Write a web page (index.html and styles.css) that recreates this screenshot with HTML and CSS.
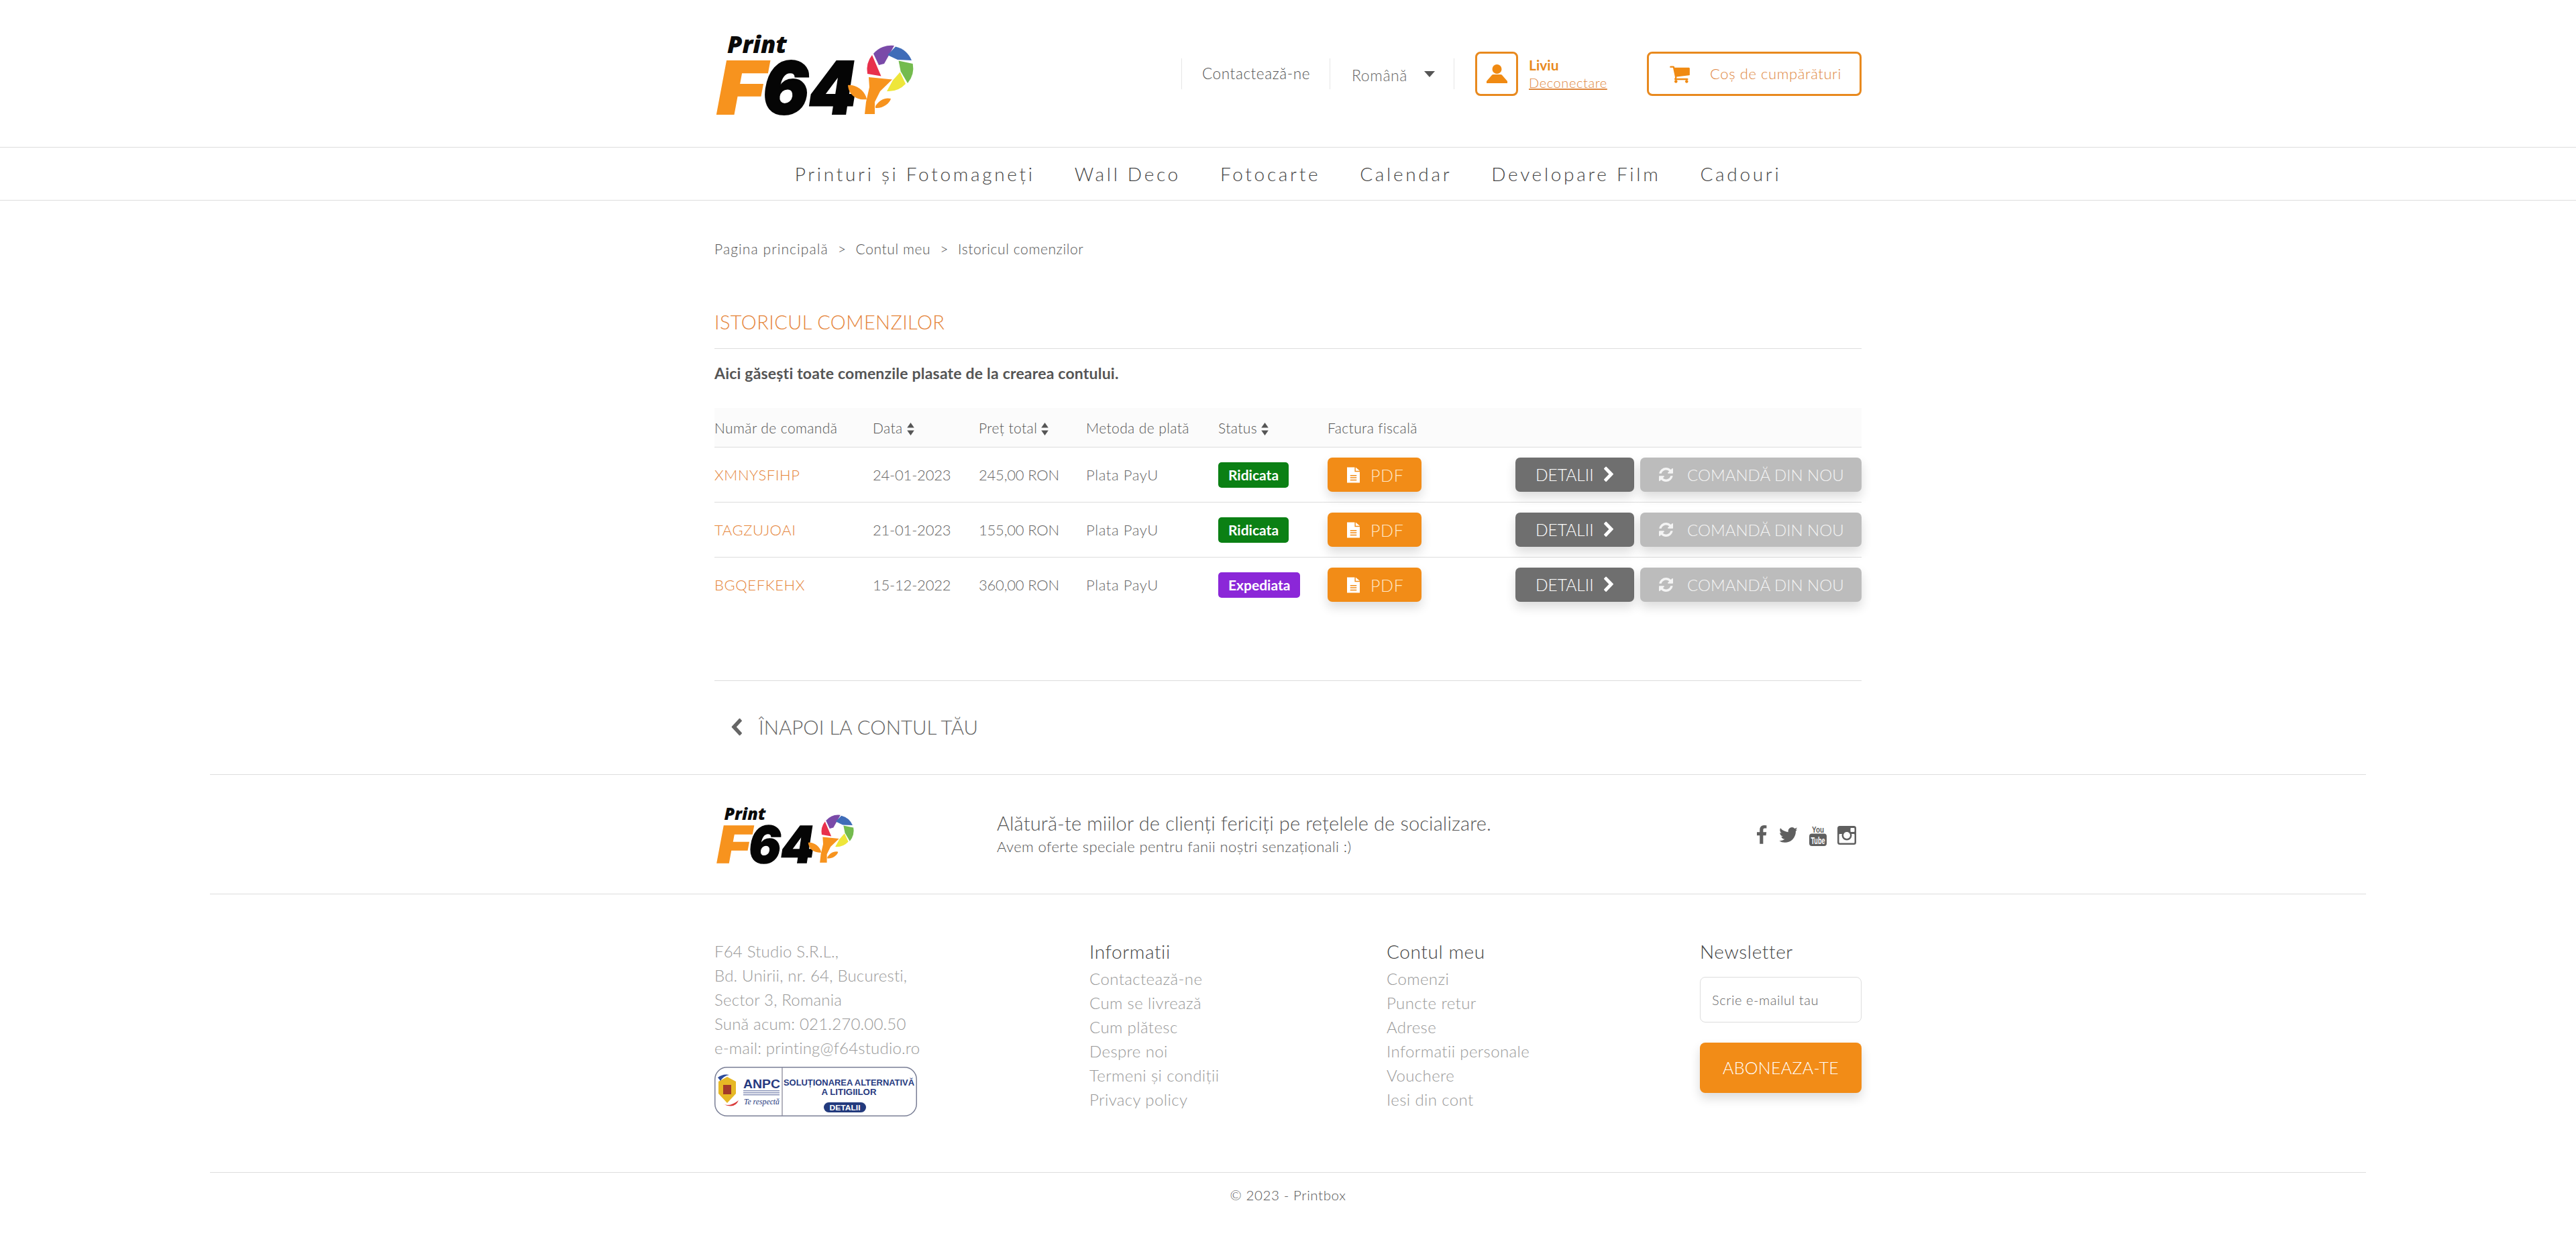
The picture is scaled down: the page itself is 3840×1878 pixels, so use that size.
FILE: index.html
```html
<!DOCTYPE html>
<html lang="ro">
<head>
<meta charset="utf-8">
<title>Istoricul comenzilor</title>
<link rel="stylesheet" href="styles.css">
</head>
<body>
<header class="top">
  <div class="wrap top-row">
    <a class="logo" href="#">
      <svg class="logo-svg" viewBox="29 20 293 120">
        <text class="lg-print" x="44" y="49" textLength="89" lengthAdjust="spacingAndGlyphs">Print</text>
        <text class="lg-f" x="29" y="140" textLength="72" lengthAdjust="spacingAndGlyphs">F</text>
        <text class="lg-64" x="97" y="140" textLength="140" lengthAdjust="spacingAndGlyphs">64</text>
        <path fill="#e8304c" d="M260 52A35 35 0 0 0 253 80L273.500 83.500Z"/>
        <path fill="#7a4aa8" d="M262 50A35 35 0 0 1 293 38L278 65 270 67Z"/>
        <path fill="#3f6cb8" d="M295 39.500A35 35 0 0 1 319 60L298 59 283 52Z"/>
        <path fill="#74bb4e" d="M299.500 60.500L320.700 65A35 35 0 0 1 313 94L302.700 76.500Z"/>
        <path fill="#eee63a" d="M310 95A35 35 0 0 1 282 106L290.700 90 301.700 77.500Z"/>
        <path fill="#f7931e" d="M255 85L290 88.500 272 106 264 122 264 140 249 140 251 122 256 100ZM224 97C235 95 250 105 252 118 238 120 225 112 224 97ZM265 128C272 118 280 115 288 117 286 125 275 132 265 131Z"/>
      </svg>
    </a>
    <div class="top-right">
      <a class="top-cell contact" href="#">Contactează-ne</a>
      <div class="top-cell lang"><span>Română</span><i class="caret"></i></div>
      <a class="user-box" href="#">
        <svg class="user-ico" viewBox="0 0 31 28"><circle cx="15.500" cy="7" r="7"/><path d="M10 15h11q2 0 3 2l7 8v3H0v-3l7-8q1-2 3-2z"/></svg>
      </a>
      <div class="user-text"><b>Liviu</b><a href="#">Deconectare</a></div>
      <a class="cart" href="#">
        <svg class="cart-ico" viewBox="0 0 1792 1792"><path d="M704 1536q0 52-38 90t-90 38-90-38-38-90 38-90 90-38 90 38 38 90zm896 0q0 52-38 90t-90 38-90-38-38-90 38-90 90-38 90 38 38 90zm128-1088v512q0 24-16.500 42.500t-40.500 21.500l-1044 122q13 60 13 70 0 16-24 64h920q26 0 45 19t19 45-19 45-45 19h-1024q-26 0-45-19t-19-45q0-11 8-31.500t16-36 21.500-40 15.500-29.500l-177-823h-204q-26 0-45-19t-19-45 19-45 45-19h256q16 0 28.500 6.500t19.500 15.500 13 24.500 8 26 5.500 29.500 4.500 26h1201q26 0 45 19t19 45z"/></svg>
        <span>Coș de cumpărături</span>
      </a>
    </div>
  </div>
</header>
<nav class="nav">
  <a href="#">Printuri și Fotomagneți</a>
  <a href="#">Wall Deco</a>
  <a href="#">Fotocarte</a>
  <a href="#">Calendar</a>
  <a href="#">Developare Film</a>
  <a href="#">Cadouri</a>
</nav>
<main class="wrap">
  <div class="crumbs"><a href="#">Pagina principală</a><span>&gt;</span><a href="#">Contul meu</a><span>&gt;</span><a href="#">Istoricul comenzilor</a></div>
  <h1 class="title">ISTORICUL COMENZILOR</h1>
  <p class="lead">Aici găsești toate comenzile plasate de la crearea contului.</p>
  <div class="orders">
    <div class="row head">
      <div>Număr de comandă</div>
      <div>Data <svg class="sort" viewBox="0 0 10 18"><path d="M5 0l5 7H0zM5 18L0 11h10z"/></svg></div>
      <div>Preț total <svg class="sort" viewBox="0 0 10 18"><path d="M5 0l5 7H0zM5 18L0 11h10z"/></svg></div>
      <div>Metoda de plată</div>
      <div>Status <svg class="sort" viewBox="0 0 10 18"><path d="M5 0l5 7H0zM5 18L0 11h10z"/></svg></div>
      <div>Factura fiscală</div>
      <div></div>
    </div>
    <div class="row">
      <a class="ref" href="#">XMNYSFIHP</a><div class="num">24-01-2023</div><div class="num">245,00 RON</div><div>Plata PayU</div>
      <div><span class="badge green">Ridicata</span></div>
      <div><a class="btn pdf" href="#"><svg class="file" viewBox="0 0 20 24"><path d="M0 0h12v7h8v17H0z"/><path d="M13.500 0L20 5.500h-6.500z"/><path class="file-l" d="M5 12h10v1.600H5zM5 15.500h10v1.600H5zM5 19h10v1.600H5z"/></svg>PDF</a></div>
      <div class="acts"><a class="btn det" href="#">DETALII<svg class="chev" viewBox="346 206 1036 1432" preserveAspectRatio="none"><path d="M1363 877l-742 742q-19 19-45 19t-45-19l-166-166q-19-19-19-45t19-45l531-531-531-531q-19-19-19-45t19-45l166-166q19-19 45-19t45 19l742 742q19 19 19 45t-19 45z"/></svg></a><a class="btn again" href="#"><svg class="ref-ico" viewBox="128 128 1536 1536"><path d="M1639 1056q0 5-1 7-64 268-268 434.500t-478 166.500q-146 0-282.500-55t-243.500-157l-129 129q-19 19-45 19t-45-19-19-45v-448q0-26 19-45t45-19h448q26 0 45 19t19 45-19 45l-137 137q71 66 161 102t187 36q134 0 250-65t186-179q11-17 53-117 8-23 30-23h192q13 0 22.500 9.500t9.500 22.500zm25-800v448q0 26-19 45t-45 19h-448q-26 0-45-19t-19-45 19-45l138-138q-148-137-349-137-134 0-250 65t-186 179q-11 17-53 117-8 23-30 23h-199q-13 0-22.500-9.500t-9.500-22.500v-7q65-268 270-434.500t480-166.500q146 0 284 55.500t245 156.500l130-129q19-19 45-19t45 19 19 45z"/></svg>COMANDĂ DIN NOU</a></div>
    </div>
    <div class="row">
      <a class="ref" href="#">TAGZUJOAI</a><div class="num">21-01-2023</div><div class="num">155,00 RON</div><div>Plata PayU</div>
      <div><span class="badge green">Ridicata</span></div>
      <div><a class="btn pdf" href="#"><svg class="file" viewBox="0 0 20 24"><path d="M0 0h12v7h8v17H0z"/><path d="M13.500 0L20 5.500h-6.500z"/><path class="file-l" d="M5 12h10v1.600H5zM5 15.500h10v1.600H5zM5 19h10v1.600H5z"/></svg>PDF</a></div>
      <div class="acts"><a class="btn det" href="#">DETALII<svg class="chev" viewBox="346 206 1036 1432" preserveAspectRatio="none"><path d="M1363 877l-742 742q-19 19-45 19t-45-19l-166-166q-19-19-19-45t19-45l531-531-531-531q-19-19-19-45t19-45l166-166q19-19 45-19t45 19l742 742q19 19 19 45t-19 45z"/></svg></a><a class="btn again" href="#"><svg class="ref-ico" viewBox="128 128 1536 1536"><path d="M1639 1056q0 5-1 7-64 268-268 434.500t-478 166.500q-146 0-282.500-55t-243.500-157l-129 129q-19 19-45 19t-45-19-19-45v-448q0-26 19-45t45-19h448q26 0 45 19t19 45-19 45l-137 137q71 66 161 102t187 36q134 0 250-65t186-179q11-17 53-117 8-23 30-23h192q13 0 22.500 9.500t9.500 22.500zm25-800v448q0 26-19 45t-45 19h-448q-26 0-45-19t-19-45 19-45l138-138q-148-137-349-137-134 0-250 65t-186 179q-11 17-53 117-8 23-30 23h-199q-13 0-22.500-9.500t-9.500-22.500v-7q65-268 270-434.500t480-166.500q146 0 284 55.500t245 156.500l130-129q19-19 45-19t45 19 19 45z"/></svg>COMANDĂ DIN NOU</a></div>
    </div>
    <div class="row last">
      <a class="ref" href="#">BGQEFKEHX</a><div class="num">15-12-2022</div><div class="num">360,00 RON</div><div>Plata PayU</div>
      <div><span class="badge purple">Expediata</span></div>
      <div><a class="btn pdf" href="#"><svg class="file" viewBox="0 0 20 24"><path d="M0 0h12v7h8v17H0z"/><path d="M13.500 0L20 5.500h-6.500z"/><path class="file-l" d="M5 12h10v1.600H5zM5 15.500h10v1.600H5zM5 19h10v1.600H5z"/></svg>PDF</a></div>
      <div class="acts"><a class="btn det" href="#">DETALII<svg class="chev" viewBox="346 206 1036 1432" preserveAspectRatio="none"><path d="M1363 877l-742 742q-19 19-45 19t-45-19l-166-166q-19-19-19-45t19-45l531-531-531-531q-19-19-19-45t19-45l166-166q19-19 45-19t45 19l742 742q19 19 19 45t-19 45z"/></svg></a><a class="btn again" href="#"><svg class="ref-ico" viewBox="128 128 1536 1536"><path d="M1639 1056q0 5-1 7-64 268-268 434.500t-478 166.500q-146 0-282.500-55t-243.500-157l-129 129q-19 19-45 19t-45-19-19-45v-448q0-26 19-45t45-19h448q26 0 45 19t19 45-19 45l-137 137q71 66 161 102t187 36q134 0 250-65t186-179q11-17 53-117 8-23 30-23h192q13 0 22.500 9.500t9.500 22.500zm25-800v448q0 26-19 45t-45 19h-448q-26 0-45-19t-19-45 19-45l138-138q-148-137-349-137-134 0-250 65t-186 179q-11 17-53 117-8 23-30 23h-199q-13 0-22.500-9.500t-9.500-22.500v-7q65-268 270-434.500t480-166.500q146 0 284 55.500t245 156.500l130-129q19-19 45-19t45 19 19 45z"/></svg>COMANDĂ DIN NOU</a></div>
    </div>
  </div>
  <div class="back-box">
    <a class="back" href="#"><svg class="back-ico" viewBox="365 105 1085 1450" preserveAspectRatio="none"><path d="M1427 301l-531 531 531 531q19 19 19 45t-19 45l-166 166q-19 19-45 19t-45-19l-742-742q-19-19-19-45t19-45l742-742q19-19 45-19t45 19l166 166q19 19 19 45t-19 45z"/></svg>ÎNAPOI LA CONTUL TĂU</a>
  </div>
</main>
<footer class="foot">
  <div class="foot-band">
    <div class="wrap social-row">
      <a class="logo-sm" href="#">
        <svg class="logo-svg-sm" viewBox="29 20 293 120">
          <text class="lg-print" x="44" y="49" textLength="89" lengthAdjust="spacingAndGlyphs">Print</text>
          <text class="lg-f" x="29" y="140" textLength="72" lengthAdjust="spacingAndGlyphs">F</text>
          <text class="lg-64" x="97" y="140" textLength="140" lengthAdjust="spacingAndGlyphs">64</text>
          <path fill="#e8304c" d="M260 52A35 35 0 0 0 253 80L273.500 83.500Z"/>
          <path fill="#7a4aa8" d="M262 50A35 35 0 0 1 293 38L278 65 270 67Z"/>
          <path fill="#3f6cb8" d="M295 39.500A35 35 0 0 1 319 60L298 59 283 52Z"/>
          <path fill="#74bb4e" d="M299.500 60.500L320.700 65A35 35 0 0 1 313 94L302.700 76.500Z"/>
          <path fill="#eee63a" d="M310 95A35 35 0 0 1 282 106L290.700 90 301.700 77.500Z"/>
          <path fill="#f7931e" d="M255 85L290 88.500 272 106 264 122 264 140 249 140 251 122 256 100ZM224 97C235 95 250 105 252 118 238 120 225 112 224 97ZM265 128C272 118 280 115 288 117 286 125 275 132 265 131Z"/>
        </svg>
      </a>
      <div class="join">
        <p class="join-a">Alătură-te miilor de clienți fericiți pe rețelele de socializare.</p>
        <p class="join-b">Avem oferte speciale pentru fanii noștri senzaționali :)</p>
      </div>
      <div class="social">
        <svg class="s-fb" viewBox="420 0 960 1792" preserveAspectRatio="none"><path d="M1343 12v264h-157q-86 0-116 36t-30 108v189h293l-39 296h-254v759h-306v-759h-255v-296h255v-218q0-186 104-288.500t277-102.500q147 0 228 12z"/></svg>
        <svg class="s-tw" viewBox="100 250 1600 1300" preserveAspectRatio="none"><path d="M1684 408q-67 98-162 167 1 14 1 42 0 130-38 259.500t-115.500 248.500-184.500 210.500-258 146-323 54.500q-271 0-496-145 35 4 78 4 225 0 401-138-105-2-188-64.500t-114-159.500q33 5 61 5 43 0 85-11-112-23-185.500-111.500t-73.500-205.500v-4q68 38 146 41-66-44-105-115t-39-154q0-88 44-163 121 149 294.500 238.500t371.500 99.500q-8-38-8-74 0-134 94.500-228.500t228.500-94.500q140 0 236 102 109-21 200-76-35 110-115 184 71-7 143-39z"/></svg>
        <svg class="s-yt" viewBox="0 0 26 32"><text class="yt-you" x="13" y="12" text-anchor="middle" textLength="18" lengthAdjust="spacingAndGlyphs">You</text><rect y="13.500" width="26" height="18.500" rx="4"/><text class="yt-tube" x="13" y="28.500" text-anchor="middle" textLength="21" lengthAdjust="spacingAndGlyphs">Tube</text></svg>
        <svg class="s-ig" viewBox="0 0 28 28"><rect width="28" height="28" rx="3.500"/><rect class="ig-w" x="2.500" y="12" width="23" height="13.500" rx="1"/><circle cx="14" cy="14" r="7.500"/><circle class="ig-w" cx="14" cy="14" r="5"/><rect class="ig-w" x="19.500" y="3" width="6" height="6" rx="1"/></svg>
      </div>
    </div>
  </div>
  <div class="foot-band cols-band">
    <div class="wrap cols">
      <div class="addr">
        <p>F64 Studio S.R.L.,</p>
        <p>Bd. Unirii, nr. 64, Bucuresti,</p>
        <p>Sector 3, Romania</p>
        <p>Sună acum: 021.270.00.50</p>
        <p>e-mail: printing@f64studio.ro</p>
        <svg class="anpc" viewBox="0 0 302 74">
          <rect x="0.750" y="0.750" width="300.500" height="72.500" rx="18" class="an-box"/>
          <line x1="101" y1="1" x2="101" y2="73" class="an-div"/>
          <path fill="#e6b825" d="M6 22l13-7 13 7v18l-13 14-13-14z"/>
          <path fill="#a33a2a" d="M13 27h12v14h-12z"/>
          <path fill="#d93a3a" d="M12 55q10 6 24-5-6 14-24 5z"/>
          <path fill="#2c4a9a" d="M5 16q8-6 17-4-9 2-13 9z"/>
          <text class="an-big" x="43" y="32" textLength="55" lengthAdjust="spacingAndGlyphs">ANPC</text>
          <rect x="43" y="35" width="54" height="1.500" fill="#8a93b8"/>
          <rect x="43" y="38" width="54" height="1.500" fill="#8a93b8"/>
          <rect x="43" y="41" width="54" height="1.500" fill="#8a93b8"/>
          <text class="an-te" x="44" y="56" textLength="53" lengthAdjust="spacingAndGlyphs">Te respectă</text>
          <text class="an-t" x="200.500" y="28" text-anchor="middle" textLength="195" lengthAdjust="spacingAndGlyphs">SOLUȚIONAREA ALTERNATIVĂ</text>
          <text class="an-t" x="200.500" y="42" text-anchor="middle" textLength="82" lengthAdjust="spacingAndGlyphs">A LITIGIILOR</text>
          <rect x="163" y="53" width="63" height="15" rx="7.500" fill="#233a7d"/>
          <text class="an-d" x="194.500" y="64.500" text-anchor="middle" textLength="46" lengthAdjust="spacingAndGlyphs">DETALII</text>
        </svg>
      </div>
      <div class="col">
        <h4>Informatii</h4>
        <a href="#">Contactează-ne</a>
        <a href="#">Cum se livrează</a>
        <a href="#">Cum plătesc</a>
        <a href="#">Despre noi</a>
        <a href="#">Termeni și condiții</a>
        <a href="#">Privacy policy</a>
      </div>
      <div class="col">
        <h4>Contul meu</h4>
        <a href="#">Comenzi</a>
        <a href="#">Puncte retur</a>
        <a href="#">Adrese</a>
        <a href="#">Informatii personale</a>
        <a href="#">Vouchere</a>
        <a href="#">Iesi din cont</a>
      </div>
      <div class="col news">
        <h4>Newsletter</h4>
        <input class="mail" type="text" placeholder="Scrie e-mailul tau">
        <a class="btn sub" href="#">ABONEAZA-TE</a>
      </div>
    </div>
  </div>
  <div class="foot-band copy">© 2023 - Printbox</div>
</footer>
</body>
</html>
```
FILE: styles.css
```css
* { box-sizing: border-box; }
html, body { margin: 0; padding: 0; background: #fff; }
body { font-family: Lato, "Open Sans", sans-serif; font-weight: 300; color: #555; font-size: 22px; letter-spacing: 0.6px; }
a { color: inherit; text-decoration: none; }
p, h1, h4 { margin: 0; font-weight: 300; }
.wrap { width: 1710px; margin: 0 auto; }
svg { overflow: visible; }

.top { height: 219px; }
.top-row { height: 219px; display: flex; align-items: center; }
.logo { margin-left: 4px; display: block; line-height: 0; }
.logo-svg { width: 293px; height: 120px; }
.logo-sm { margin-left: 4px; display: block; line-height: 0; width: 417px; }
.logo-svg-sm { width: 204px; height: 84px; }
.lg-print { font: italic 800 36px "Open Sans", sans-serif; letter-spacing: 0; fill: #0a0a0a; }
.lg-f, .lg-64 { font: italic 900 108px Inter, "Open Sans", sans-serif; letter-spacing: 0; stroke-width: 2px; }
.lg-f { fill: #f7931e; stroke: #f7931e; }
.lg-64 { fill: #050505; stroke: #050505; }

.top-right { margin-left: auto; display: flex; align-items: center; }
.top-cell { height: 46px; display: flex; align-items: center; padding-left: 30px; border-left: 1px solid #e6e6e6; }
.contact { width: 221px; font-size: 22.5px; }
.lang { width: 186px; border-right: 1px solid #e6e6e6; margin-right: 31px; padding-left: 32px; padding-top: 4px; color: #666; font-size: 23px; }
.caret { margin-left: 25px; margin-top: -3px; width: 0; height: 0; border-left: 8px solid transparent; border-right: 8px solid transparent; border-top: 9px solid #555; }
.user-box { width: 64px; height: 66px; border: 3px solid #e8891e; border-radius: 8px; display: flex; align-items: center; justify-content: center; }
.user-ico { width: 31px; height: 28px; fill: #f08a12; }
.user-text { width: 192px; padding-left: 16px; display: flex; flex-direction: column; }
.user-text b { font-weight: 700; color: #e8891e; font-size: 21px; line-height: 26px; letter-spacing: 0; }
.user-text a { color: #e0883f; text-decoration: underline; line-height: 26px; font-size: 20px; }
.cart { width: 320px; height: 66px; border: 3px solid #e8891e; border-radius: 8px; display: flex; align-items: center; padding-left: 30px; color: #e0883f; }
.cart-ico { width: 32px; height: 32px; fill: #f08a12; margin-right: 29px; }

.nav { height: 80px; border-top: 1px solid #ddd; border-bottom: 1px solid #ddd; display: flex; justify-content: center; align-items: center; gap: 59px; font-size: 28px; letter-spacing: 3.700px; color: #444; }

.crumbs { margin-top: 56px; height: 30px; display: flex; align-items: center; gap: 14px; color: #555; font-size: 21px; }
.crumbs a:first-child { letter-spacing: 1.100px; }
.title { margin-top: 75px; height: 60px; line-height: 40px; font-size: 29px; color: #e5853a; border-bottom: 1px solid #ddd; letter-spacing: 0.400px; }
.lead { height: 72px; line-height: 72px; font-weight: 700; font-size: 23px; color: #555; letter-spacing: 0.200px; }
.orders { margin-top: 16px; }
.row { display: grid; grid-template-columns: 236px 158px 160px 197px 163px 280px 1fr; align-items: center; height: 82px; border-bottom: 1px solid #ddd; color: #666; font-size: 22px; }
.row.head { height: 59px; background: #fbfbfb; color: #555; font-size: 21px; letter-spacing: 0.400px; }
.row.last { border-bottom: 0; height: 81px; }
.num { letter-spacing: -0.200px; }
.sort { width: 11px; height: 19px; fill: #555; vertical-align: -3px; }
.ref { color: #e5853a; }
.badge { display: inline-block; height: 38px; line-height: 38px; border-radius: 5px; color: #fff; font-weight: 700; font-size: 21px; padding: 0 15px; letter-spacing: 0; }
.green { background: #0b8014; }
.purple { background: #8b27d8; }
.btn { display: inline-flex; align-items: center; height: 51px; border-radius: 7px; color: #fff; box-shadow: 0 8px 16px rgba(0,0,0,.14); }
.pdf { width: 140px; background: #f28c17; padding-left: 29px; font-size: 25px; color: #ffe9c9; }
.file { width: 19px; height: 24px; margin-right: 16px; fill: #fff; }
.file-l { fill: #f28c17; }
.acts { display: flex; justify-content: flex-end; gap: 9px; }
.det { width: 177px; background: #6f6f6f; padding-left: 30px; font-size: 24.500px; letter-spacing: 0; }
.chev { width: 14px; height: 20px; fill: #fff; margin-left: 15px; }
.again { width: 330px; background: #bcbcbc; padding-left: 28px; font-size: 24px; letter-spacing: 0; color: #f4f4f4; }
.ref-ico { width: 21px; height: 21px; fill: #f4f4f4; margin-right: 21px; }

.back-box { margin-top: 102px; height: 140px; border-top: 1px solid #ddd; padding: 0 0 3px 25px; display: flex; align-items: center; }
.back { display: flex; align-items: center; font-size: 29.500px; letter-spacing: 0; color: #666; }
.back-ico { width: 16px; height: 23px; fill: #666; margin-right: 25px; }

.foot { width: 3214px; margin: 0 auto; }
.foot-band { border-top: 1px solid #ddd; }
.social-row { height: 177px; display: flex; align-items: center; }
.join { flex: 1; }
.join-a { font-size: 29px; line-height: 35px; color: #555; letter-spacing: 0.150px; }
.join-b { font-size: 22px; line-height: 35px; color: #555; letter-spacing: 0.400px; }
.social { display: flex; align-items: center; margin: 2px 8px 0 0; }
.social svg { fill: #5f5f5f; display: block; }
.s-fb { width: 16px; height: 30px; margin-right: 18px; }
.s-tw { width: 28px; height: 23px; margin-right: 17px; }
.s-yt { width: 26px; height: 32px; margin-right: 16px; }
.s-ig { width: 28px; height: 28px; }
.yt-you { font: 700 12px "Liberation Sans", sans-serif; letter-spacing: 0; }
.yt-tube { font: 700 14px "Liberation Sans", sans-serif; letter-spacing: 0; fill: #fff; }
.social .ig-w { fill: #fff; }

.cols { height: 414px; padding-top: 67px; display: grid; grid-template-columns: 559px 443px 467px 1fr; align-items: start; }
.addr p { line-height: 36px; font-size: 24px; color: #999; letter-spacing: 0.200px; }
.anpc { display: block; width: 302px; height: 74px; margin-top: 10px; }
.an-box { fill: #fff; stroke: #7a7f96; stroke-width: 1.500px; }
.an-div { stroke: #9a9aa8; stroke-width: 1.500px; }
.an-big { font: 700 18px "Liberation Sans", sans-serif; letter-spacing: 0; fill: #263a80; }
.an-te { font: italic 400 13px "Liberation Serif", serif; letter-spacing: 0; fill: #263a80; }
.an-t { font: 700 12.500px "Liberation Sans", sans-serif; letter-spacing: 0; fill: #263a80; }
.an-d { font: 700 11px "Liberation Sans", sans-serif; letter-spacing: 0; fill: #fff; }
.col { display: flex; flex-direction: column; align-items: flex-start; }
.col h4 { line-height: 36px; font-size: 28px; color: #444; margin-bottom: 5px; }
.col a { line-height: 36px; font-size: 24px; color: #999; letter-spacing: 0.400px; }
.news h4 { margin-bottom: 20px; }
.mail { width: 241px; height: 68px; border: 1px solid #ddd; border-radius: 8px; padding: 0 17px; font: 300 20px Lato, sans-serif; letter-spacing: .6px; color: #666; outline: 0; }
.mail::placeholder { color: #666; opacity: 1; }
.col .sub { width: 241px; height: 75px; margin-top: 30px; background: #f28c17; color: #fff; justify-content: center; font-size: 25px; letter-spacing: 0.300px; line-height: 75px; border-radius: 8px; }
.copy { height: 66px; line-height: 66px; text-align: center; font-size: 20.500px; color: #555; }
```
